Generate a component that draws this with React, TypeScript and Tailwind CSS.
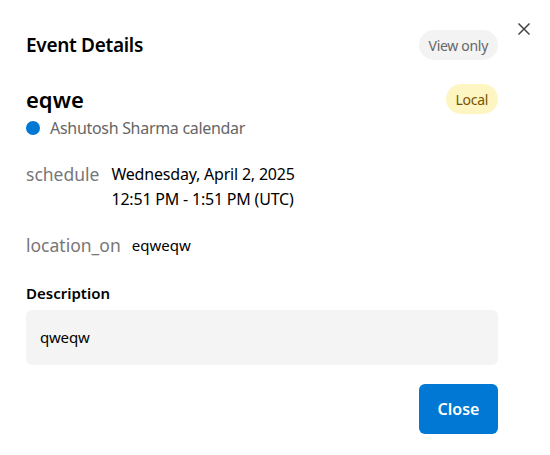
import React from "react";

export default function App() {
  return (
    <div
      className="relative w-[550px] h-[455px] bg-white text-black overflow-hidden"
      style={{ fontFamily: '"Noto Sans", "Open Sans", sans-serif' }}
    >
      <button className="absolute left-[517px] top-[22px] w-[14px] h-[14px] flex items-center justify-center text-[#444]">
        <svg width="14" height="14" viewBox="0 0 14 14" fill="none" stroke="currentColor" strokeWidth="1.5">
          <path d="M1.5 1.5 L12.5 12.5 M12.5 1.5 L1.5 12.5" />
        </svg>
      </button>
      <div className="flex flex-col pl-[26px] pr-[52px] pt-[30px]">
        <div className="flex items-center justify-between h-[30px]">
          <h2 className="text-[19px] font-semibold leading-none tracking-[-0.3px]">Event Details</h2>
          <span className="h-[30px] px-[10px] rounded-full bg-[#f3f3f3] text-[#666] text-[14px] tracking-[-0.3px] flex items-center">
            View only
          </span>
        </div>
        <div className="flex items-start justify-between mt-[24px]">
          <div className="flex flex-col">
            <div className="text-[22px] font-semibold leading-[30px]">eqwe</div>
            <div className="flex items-center gap-[10px] mt-[2px]">
              <span className="w-[14px] h-[14px] rounded-full bg-[#0078d4] inline-block" />
              <span className="text-[16px] text-[#666] tracking-[-0.3px]">Ashutosh Sharma calendar</span>
            </div>
          </div>
          <span className="h-[30px] px-[10px] rounded-full bg-[#fdf6c3] text-[#7a5200] text-[14px] tracking-[-0.3px] flex items-center">
            Local
          </span>
        </div>
        <div className="flex items-start gap-[12px] mt-[22px]">
          <span className="text-[17.5px] text-[#777] leading-[24px]">schedule</span>
          <div className="flex flex-col text-[16px] leading-[25px] tracking-[-0.2px]">
            <span>Wednesday, April 2, 2025</span>
            <span>12:51 PM - 1:51 PM (UTC)</span>
          </div>
        </div>
        <div className="flex items-center gap-[11px] mt-[21px]">
          <span className="text-[17.5px] text-[#777] leading-[24px]">location_on</span>
          <span className="text-[15px]">eqweqw</span>
        </div>
        <div className="text-[15px] font-semibold mt-[25px] leading-[22px]">Description</div>
        <div className="mt-[6px] h-[55px] rounded-[6px] bg-[#f4f4f4] px-[14px] flex items-center text-[15px] tracking-[-0.2px]">
          qweqw
        </div>
        <div className="flex justify-end mt-[19px]">
          <button className="w-[79px] h-[50px] rounded-[6px] bg-[#0078d4] text-white text-[16px] font-semibold">
            Close
          </button>
        </div>
      </div>
    </div>
  );
}
